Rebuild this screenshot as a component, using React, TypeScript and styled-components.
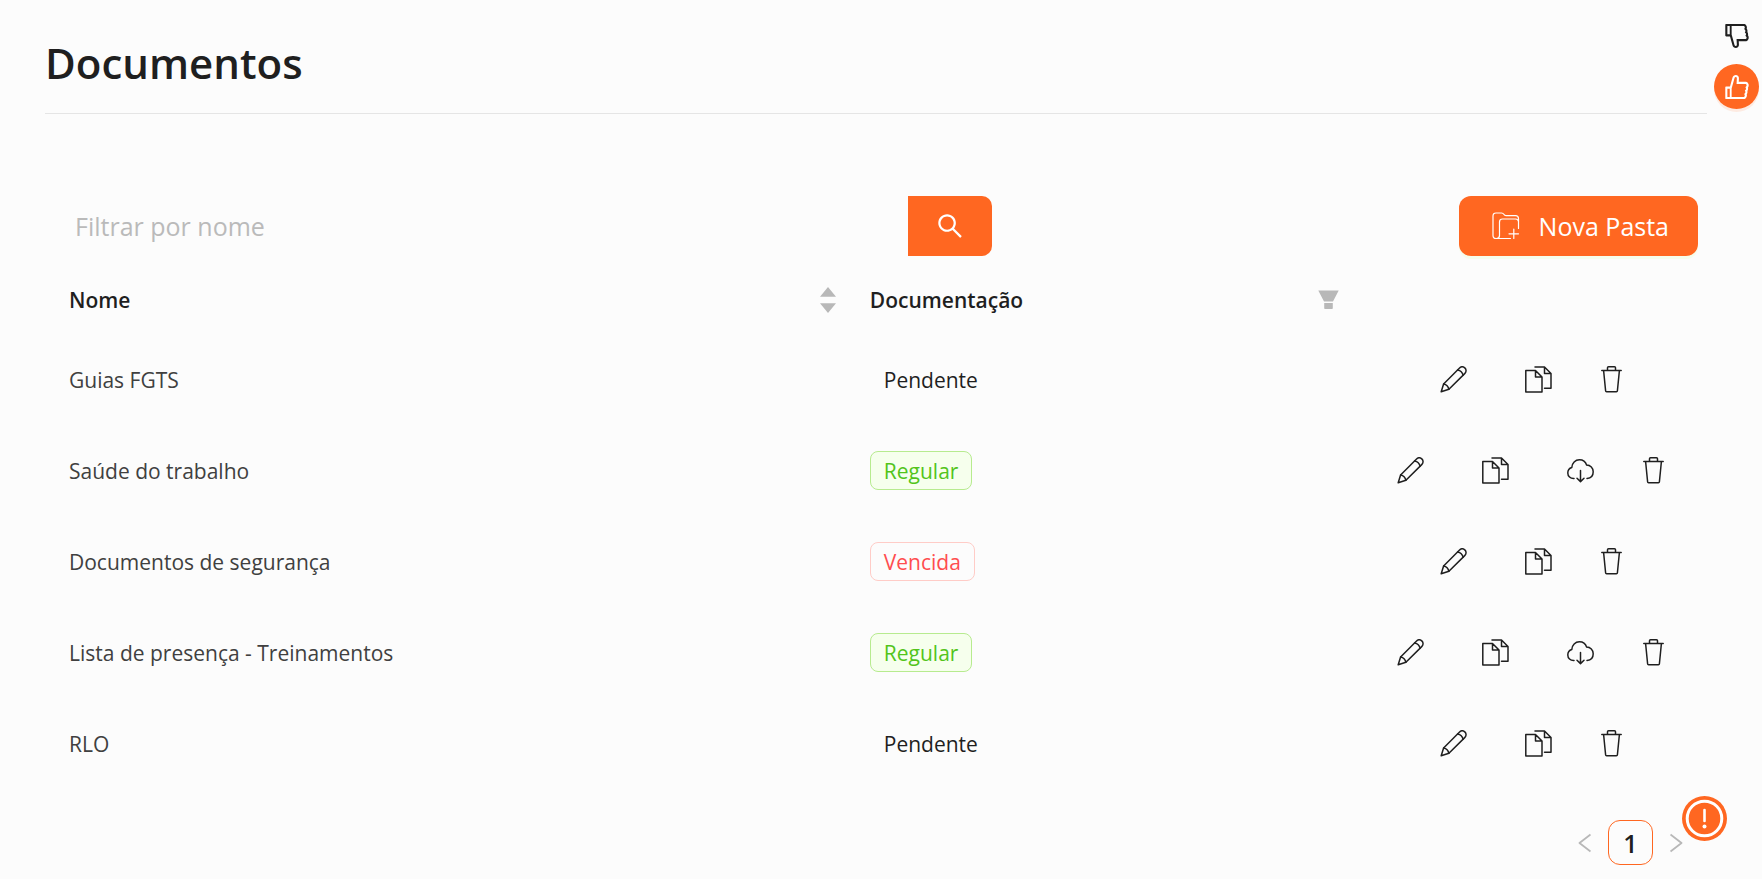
import React from "react";
import styled, { createGlobalStyle, css } from "styled-components";
import { AiOutlineDislike, AiOutlineLike, AiOutlineSearch } from "react-icons/ai";

const ORANGE = "#ff6721";

const GlobalStyle = createGlobalStyle`
  *, *::before, *::after { box-sizing: border-box; }
  body {
    margin: 0;
    background: #fcfcfc;
    color: #1f1f1f;
    font-family: "Segoe UI", "Open Sans", "Noto Sans", sans-serif;
    font-size: 21px;
    line-height: 32px;
  }
  button, input { font: inherit; color: inherit; }
  button {
    display: inline-flex;
    align-items: center;
    justify-content: center;
    padding: 0;
    border: 0;
    background: none;
    cursor: pointer;
  }
  svg { display: block; flex: none; }
`;

const Page = styled.div`
  padding: 35px 55px 13px 45px;
`;

const Header = styled.header`
  padding-bottom: 22px;
  border-bottom: 1px solid #e5e5e5;
`;

const Title = styled.h1`
  margin: 0;
  font-size: 42px;
  line-height: 56px;
  font-weight: 600;
`;

const Content = styled.main`
  padding: 82px 9px 0 12px;
`;

const Toolbar = styled.div`
  display: flex;
  align-items: center;
  justify-content: space-between;
  height: 60px;
`;

const SearchForm = styled.form`
  display: flex;
  width: 57%;
  height: 100%;
`;

const SearchInput = styled.input`
  flex: 1;
  min-width: 0;
  padding: 0 18px;
  border: 0;
  outline: 0;
  background: transparent;
  font-size: 25px;
  &::placeholder {
    color: #bababa;
    opacity: 1;
  }
`;

const SearchButton = styled.button`
  width: 84px;
  border-radius: 0 10px 10px 0;
  background: ${ORANGE};
  color: #fff;
`;

const NewFolderButton = styled.button`
  height: 60px;
  padding: 0 29px 0 33px;
  gap: 19px;
  border-radius: 12px;
  background: ${ORANGE};
  color: #fff;
  font-size: 25px;
  box-shadow: 0 3px 0 #f6fdec;
`;

const Table = styled.table`
  width: 100%;
  margin-top: 10px;
  border-collapse: collapse;
  table-layout: fixed;
`;

const HeadCell = styled.th<{ $width: string; $end?: number }>`
  width: ${(p) => p.$width};
  height: 68px;
  padding: 0 ${(p) => p.$end ?? 12}px 0 12px;
  text-align: left;
  font-weight: 600;
`;

const HeadContent = styled.div`
  display: flex;
  align-items: center;
  justify-content: space-between;
`;

const HeadButton = styled.button`
  color: #b8b8b8;
`;

const Cell = styled.td`
  height: 91px;
  padding: 0 12px;
`;

const NameCell = styled(Cell)`
  color: #404040;
`;

const ActionsCell = styled(Cell)`
  padding: 0 9px 0 0;
`;

type Status = "Pendente" | "Regular" | "Vencida";

const tagColors = {
  Pendente: css`
    border-color: transparent;
  `,
  Regular: css`
    color: #52c41a;
    border-color: #b7eb8f;
    background: #f6ffed;
  `,
  Vencida: css`
    color: #ff4d4f;
    border-color: #ffccc7;
  `,
};

const Tag = styled.span<{ $status: Status }>`
  display: inline-block;
  height: 39px;
  padding: 0 13px;
  border: 1px solid;
  border-radius: 8px;
  line-height: 39px;
  vertical-align: middle;
  ${(p) => tagColors[p.$status]}
`;

const Actions = styled.div`
  display: flex;
  justify-content: center;
  gap: 40px;
`;

const ActionButton = styled.button`
  padding: 0 9px;
  &:last-child {
    padding-right: 0;
    padding-left: 0;
  }
`;

const Pagination = styled.nav`
  display: flex;
  align-items: center;
  justify-content: flex-end;
  gap: 17px;
  margin-top: 31px;
  padding-right: 15px;
`;

const PageArrow = styled.button`
  color: #b8b8b8;
`;

const PageNumber = styled.button`
  width: 45px;
  height: 45px;
  border: 1px solid ${ORANGE};
  border-radius: 12px;
  font-size: 25px;
  font-weight: 600;
`;

const Feedback = styled.aside`
  position: fixed;
  top: 13px;
  right: 3px;
  display: flex;
  flex-direction: column;
  gap: 6px;
`;

const RoundButton = styled.button<{ $filled?: boolean }>`
  width: 45px;
  height: 45px;
  border-radius: 50%;
  ${(p) =>
    p.$filled &&
    css`
      background: ${ORANGE};
      color: #fff;
      box-shadow: 0 3px 0 #fdebe2;
    `}
`;

const AlertButton = styled.button`
  position: fixed;
  right: 35px;
  bottom: 38px;
  border-radius: 50%;
`;

const line = {
  fill: "none",
  stroke: "currentColor",
  strokeLinejoin: "round",
  strokeLinecap: "round",
} as const;

const PencilIcon = () => (
  <svg width="27" height="27" viewBox="0 0 27 27" strokeWidth="1.5" {...line}>
    <path d="M1.2 25.8 3.6 18 19.3 2.2c1.8-1.8 3.9-1.8 5.5-.3 1.7 1.7 1.7 3.9-.1 5.7L8.9 23.3Z" />
    <path d="M3.6 18c2.7.5 4.7 2.5 5.3 5.3M17.6 3.9c2.8.5 4.9 2.5 5.5 5.3" />
  </svg>
);

const CopyIcon = () => (
  <svg width="27" height="27" viewBox="0 0 27 27" strokeWidth="1.5" {...line}>
    <path d="M.8 4.5h9.7l6.500 6.500v15H.8ZM10.500 4.500V11H17" />
    <path d="M10 1h9.500L26 7.500v14.800h-6.500M19.500 1v6.500H26" />
  </svg>
);

const CloudDownloadIcon = () => (
  <svg width="27" height="27" viewBox="0 0 27 27" strokeWidth="1.5" {...line}>
    <path d="M7 21.5C3.3 21.7.8 19.2.8 16c0-2.8 1.7-4.9 4-5.5C5 6.2 8.3 2.8 12.4 2.8c3.6 0 6.2 2 7.2 5.2 3.8.1 6.6 3 6.6 6.7 0 3.8-2.4 6.5-6.2 6.8" />
    <path d="M13.5 13.5v11M10 21.3l3.5 3.300 3.500-3.300" />
  </svg>
);

const TrashIcon = () => (
  <svg width="21" height="27" viewBox="0 0 21 27" strokeWidth="1.5" {...line}>
    <path d="M.8 4.5h19.4M6.5 4.500V1.800q0-1 1-1h6q1 0 1 1v2.700M2.600 4.500l2 20.200q.1 1 1 1h9.800q.9 0 1-1l2-20.200" />
  </svg>
);

const FolderPlusIcon = () => (
  <svg width="28" height="28" viewBox="0 0 28 28" strokeWidth="1.2" {...line}>
    <path d="M18.5 26.5H4q-3 0-3-3V4q0-3 3-3h5.5q1.5 0 2.3 1.3T14 3.7h9.5q3 0 3 3V16.5" />
    <path d="M4.5 26.5q3 0 3-3V10q0-3 3-3h13q2.5 0 3 2.5M21.8 17v9.5M17 21.8h9.5" />
  </svg>
);

const SortIcon = () => (
  <svg width="20" height="26" viewBox="0 0 20 26" fill="currentColor">
    <path d="M10 0l8 9.7H2ZM10 26l8-9.7H2Z" />
  </svg>
);

const FilterIcon = () => (
  <svg width="21" height="20" viewBox="0 0 21 20" fill="currentColor">
    <path d="M.3.5h20.4L15 11.500H6ZM6.200 13h8.600v5.200q0 .8-.8.800H7q-.8 0-.8-.8Z" />
  </svg>
);

const ArrowIcon = ({ d }: { d: string }) => (
  <svg width="13" height="20" viewBox="0 0 13 20" strokeWidth="1.8" {...line} strokeLinecap="butt">
    <path d={d} />
  </svg>
);

const AlertIcon = () => (
  <svg width="45" height="45" viewBox="0 0 45 45">
    <circle cx="22.5" cy="22.5" r="22.5" fill={ORANGE} />
    <circle cx="22.5" cy="22.5" r="17.3" fill="none" stroke="#fff" strokeWidth="3" />
    <path d="M22.5 14v11" stroke="#fff" strokeWidth="2.6" strokeLinecap="round" />
    <circle cx="22.5" cy="30.5" r="2" fill="#fff" />
  </svg>
);

interface Folder {
  name: string;
  status: Status;
}

const folders: Folder[] = [
  { name: "Guias FGTS", status: "Pendente" },
  { name: "Saúde do trabalho", status: "Regular" },
  { name: "Documentos de segurança", status: "Vencida" },
  { name: "Lista de presença - Treinamentos", status: "Regular" },
  { name: "RLO", status: "Pendente" },
];

const FolderRow = ({ name, status }: Folder) => (
  <tr>
    <NameCell>{name}</NameCell>
    <Cell>
      <Tag $status={status}>{status}</Tag>
    </Cell>
    <ActionsCell>
      <Actions>
        <ActionButton aria-label={`Editar ${name}`}>
          <PencilIcon />
        </ActionButton>
        <ActionButton aria-label={`Copiar ${name}`}>
          <CopyIcon />
        </ActionButton>
        {status === "Regular" && (
          <ActionButton aria-label={`Baixar ${name}`}>
            <CloudDownloadIcon />
          </ActionButton>
        )}
        <ActionButton aria-label={`Excluir ${name}`}>
          <TrashIcon />
        </ActionButton>
      </Actions>
    </ActionsCell>
  </tr>
);

export default function App() {
  return (
    <>
      <GlobalStyle />
      <Page>
        <Header>
          <Title>Documentos</Title>
        </Header>
        <Content>
          <Toolbar>
            <SearchForm role="search" onSubmit={(e) => e.preventDefault()}>
              <SearchInput type="text" placeholder="Filtrar por nome" aria-label="Filtrar por nome" />
              <SearchButton type="submit" aria-label="Buscar">
                <AiOutlineSearch size={30} />
              </SearchButton>
            </SearchForm>
            <NewFolderButton>
              <FolderPlusIcon />
              Nova Pasta
            </NewFolderButton>
          </Toolbar>
          <Table>
            <thead>
              <tr>
                <HeadCell $width="48.8%" $end={20}>
                  <HeadContent>
                    Nome
                    <HeadButton aria-label="Ordenar por nome">
                      <SortIcon />
                    </HeadButton>
                  </HeadContent>
                </HeadCell>
                <HeadCell $width="30.8%" $end={24}>
                  <HeadContent>
                    Documentação
                    <HeadButton aria-label="Filtrar documentação">
                      <FilterIcon />
                    </HeadButton>
                  </HeadContent>
                </HeadCell>
                <HeadCell $width="20.4%" aria-label="Ações" />
              </tr>
            </thead>
            <tbody>
              {folders.map((f) => (
                <FolderRow key={f.name} {...f} />
              ))}
            </tbody>
          </Table>
          <Pagination aria-label="Paginação">
            <PageArrow aria-label="Página anterior">
              <ArrowIcon d="M12.5 1.5 1.5 10l11 8.5" />
            </PageArrow>
            <PageNumber aria-current="page">1</PageNumber>
            <PageArrow aria-label="Próxima página">
              <ArrowIcon d="M.5 1.5 11.5 10l-11 8.5" />
            </PageArrow>
          </Pagination>
        </Content>
      </Page>
      <Feedback aria-label="Avaliação">
        <RoundButton aria-label="Não gostei">
          <AiOutlineDislike size={30} />
        </RoundButton>
        <RoundButton $filled aria-label="Gostei">
          <AiOutlineLike size={30} />
        </RoundButton>
      </Feedback>
      <AlertButton aria-label="Avisos">
        <AlertIcon />
      </AlertButton>
    </>
  );
}
